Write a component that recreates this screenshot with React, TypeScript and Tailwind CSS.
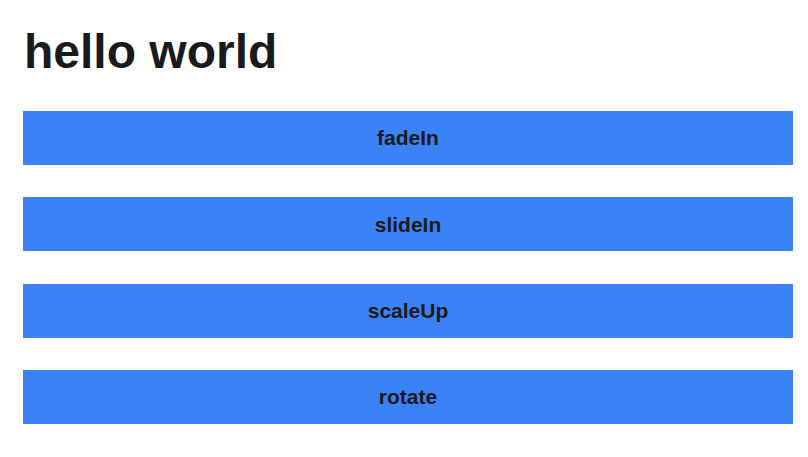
const effects = ['fadeIn', 'slideIn', 'scaleUp', 'rotate'];

export default function App() {
  return (
    <div className="min-h-screen bg-white font-['Liberation_Sans',Arial,sans-serif] text-[#1a1a1a]">
      <div className="ml-[23px] w-[770px] pt-[28px] pb-[33px]">
        <h1 className="pl-px text-5xl font-bold leading-[48px]">hello world</h1>
        <div className="mt-[35px] flex flex-col gap-[32.33px]">
          {effects.map(name => (
            <button
              key={name}
              type="button"
              className="flex h-[54px] w-full items-center justify-center bg-[#3b82f6] text-[21px] font-bold text-[#1a1a1a]"
            >
              {name}
            </button>
          ))}
        </div>
      </div>
    </div>
  );
}
